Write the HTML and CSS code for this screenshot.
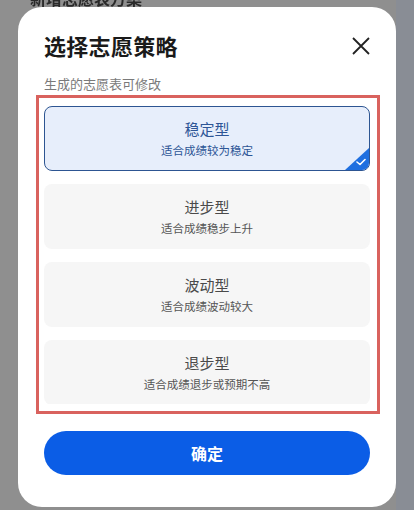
FILE: index.html
```html
<!DOCTYPE html>
<html lang="zh-CN">
<head>
<meta charset="utf-8">
<link rel="stylesheet" href="styles.css">
</head>
<body>
<div class="page">
  <div class="page-title">新增志愿表方案</div>
  <div class="side"></div>
</div>
<div class="modal">
  <div class="header">
    <div class="title">选择志愿策略</div>
    <svg class="close" width="20" height="20" viewBox="0 0 20 20"><path d="M2 2L18 18M18 2L2 18" stroke="#222" stroke-width="1.8" fill="none"/></svg>
  </div>
  <div class="subtitle">生成的志愿表可修改</div>
  <div class="highlight">
    <div class="list">
      <div class="card selected">
        <div class="card-title">稳定型</div>
        <div class="card-desc">适合成绩较为稳定</div>
        <div class="badge">
          <svg width="10" height="8" viewBox="0 0 10 8"><path d="M1 4L4 6.5L9 1.5" stroke="#fff" stroke-width="1.6" fill="none" stroke-linecap="round" stroke-linejoin="round"/></svg>
        </div>
      </div>
      <div class="card">
        <div class="card-title">进步型</div>
        <div class="card-desc">适合成绩稳步上升</div>
      </div>
      <div class="card">
        <div class="card-title">波动型</div>
        <div class="card-desc">适合成绩波动较大</div>
      </div>
      <div class="card">
        <div class="card-title">退步型</div>
        <div class="card-desc">适合成绩退步或预期不高</div>
      </div>
    </div>
  </div>
  <button class="confirm">确定</button>
</div>
</body>
</html>
```
FILE: styles.css
```css
html, body {
  margin: 0;
  padding: 0;
  width: 414px;
  height: 510px;
  overflow: hidden;
}
body {
  background: #8f8f8f;
  font-family: "Noto Sans CJK SC", "Noto Sans", sans-serif;
  position: relative;
}
.page {
  height: 510px;
  display: flex;
  justify-content: space-between;
}
.page-title {
  margin-top: -12px;
  margin-left: 30px;
  font-size: 16px;
  line-height: 20px;
  font-weight: 700;
  color: #2a2a2a;
  filter: blur(0.6px);
}
.side {
  width: 18px;
  background: #898d95;
}
.modal {
  position: absolute;
  left: 18px;
  top: 7px;
  width: 378px;
  height: 500px;
  background: #fff;
  border-radius: 24px;
  box-sizing: border-box;
  padding: 22px 0 0 0;
  display: flex;
  flex-direction: column;
}
.header {
  display: flex;
  align-items: center;
  justify-content: space-between;
  padding: 0 25px 0 26px;
  height: 32px;
}
.title {
  font-size: 22px;
  font-weight: 700;
  color: #1a1a1a;
  letter-spacing: 0.3px;
}
.close {
  display: block;
  margin-top: 2px;
}
.subtitle {
  margin: 14px 0 0 26px;
  font-size: 13px;
  line-height: 18px;
  color: #7a7a7a;
}
.highlight {
  margin: 2px 16px 0 18px;
  border: 3px solid #d9625e;
  padding: 8px 7px 7px 5px;
}
.list {
  height: 298px;
  overflow: hidden;
  display: flex;
  flex-direction: column;
  gap: 13px;
}
.card {
  flex: none;
  position: relative;
  height: 65px;
  box-sizing: border-box;
  border-radius: 8px;
  background: #f6f6f6;
  display: flex;
  flex-direction: column;
  align-items: center;
  justify-content: center;
  overflow: hidden;
}
.card.selected {
  background: #e7eefb;
  border: 1px solid #2d5592;
}
.card-title {
  font-size: 15px;
  line-height: 20px;
  color: #4a4a4a;
}
.card-desc {
  margin-top: 3px;
  font-size: 11.5px;
  line-height: 16px;
  color: #555;
}
.selected .card-title {
  color: #2d5596;
}
.selected .card-desc {
  color: #2d5596;
}
.badge {
  position: absolute;
  right: 0;
  bottom: 0;
  width: 24px;
  height: 22px;
  background: #1f6fe0;
  clip-path: polygon(100% 0, 100% 100%, 0 100%);
  display: flex;
  align-items: flex-end;
  justify-content: flex-end;
  padding: 0 3px 4px 0;
  box-sizing: border-box;
}
.badge svg {
  display: block;
}
.confirm {
  margin: 17px 26px 0 26px;
  height: 44px;
  border: none;
  border-radius: 22px;
  background: #0b5de6;
  color: #fff;
  font-family: "Noto Sans CJK SC", "Noto Sans", sans-serif;
  font-size: 16px;
  font-weight: 700;
}
```
